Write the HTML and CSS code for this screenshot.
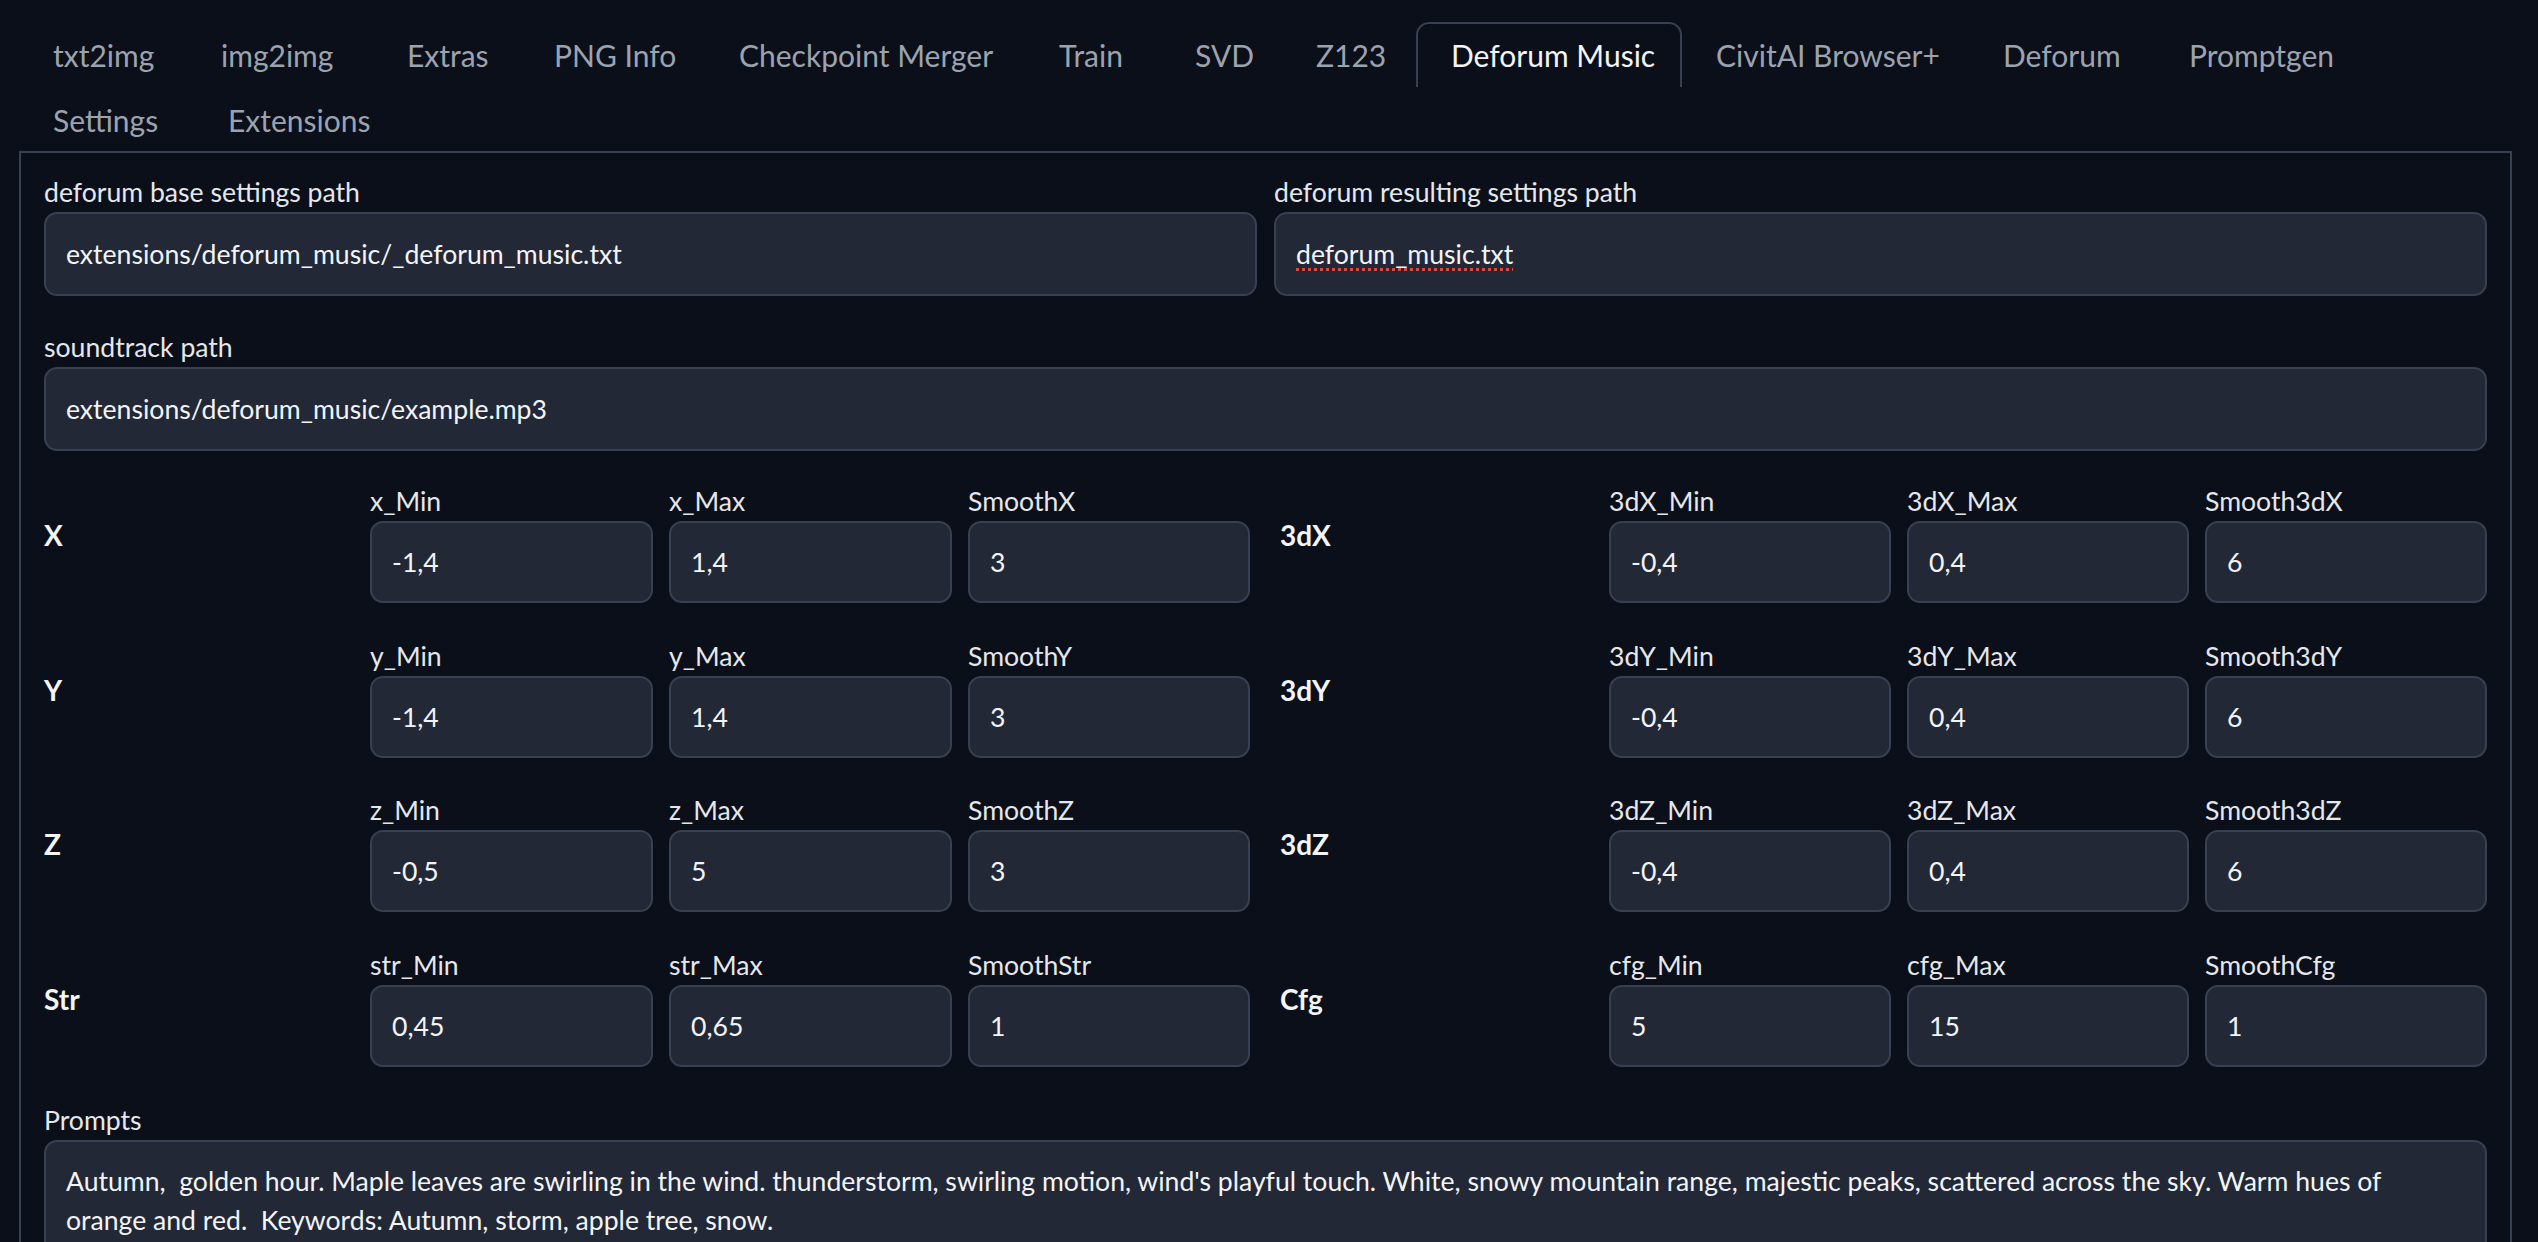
FILE: index.html
```html
<!DOCTYPE html>
<html lang="en">
<head>
<meta charset="utf-8">
<title>Deforum Music</title>
<link rel="stylesheet" href="styles.css">
</head>
<body>
<div class="app">
  <nav class="tabs">
    <div class="tab w-txt2img">txt2img</div>
    <div class="tab w-img2img">img2img</div>
    <div class="tab w-extras">Extras</div>
    <div class="tab w-png">PNG Info</div>
    <div class="tab w-merger">Checkpoint Merger</div>
    <div class="tab w-train">Train</div>
    <div class="tab w-svd">SVD</div>
    <div class="tab w-z123">Z123</div>
    <div class="tab active w-music">Deforum Music</div>
    <div class="tab w-civit">CivitAI Browser+</div>
    <div class="tab w-deforum">Deforum</div>
    <div class="tab w-promptgen">Promptgen</div>
    <div class="tab w-settings">Settings</div>
    <div class="tab w-extensions">Extensions</div>
  </nav>

  <section class="panel">
    <div class="stack">
      <div class="pair">
        <div class="field">
          <span class="lbl">deforum base settings path</span>
          <div class="box">extensions/deforum_music/_deforum_music.txt</div>
        </div>
        <div class="field">
          <span class="lbl">deforum resulting settings path</span>
          <div class="box"><span class="misspelled">deforum_music.txt</span></div>
        </div>
      </div>

      <div class="field">
        <span class="lbl">soundtrack path</span>
        <div class="box">extensions/deforum_music/example.mp3</div>
      </div>

      <div class="numrow">
        <div class="rowlbl">X</div>
        <div class="field"><span class="lbl">x_Min</span><div class="box num">-1,4</div></div>
        <div class="field"><span class="lbl">x_Max</span><div class="box num">1,4</div></div>
        <div class="field"><span class="lbl">SmoothX</span><div class="box num">3</div></div>
        <div class="rowlbl rowlbl-r">3dX</div>
        <div class="field"><span class="lbl">3dX_Min</span><div class="box num">-0,4</div></div>
        <div class="field"><span class="lbl">3dX_Max</span><div class="box num">0,4</div></div>
        <div class="field"><span class="lbl">Smooth3dX</span><div class="box num">6</div></div>
      </div>

      <div class="numrow">
        <div class="rowlbl">Y</div>
        <div class="field"><span class="lbl">y_Min</span><div class="box num">-1,4</div></div>
        <div class="field"><span class="lbl">y_Max</span><div class="box num">1,4</div></div>
        <div class="field"><span class="lbl">SmoothY</span><div class="box num">3</div></div>
        <div class="rowlbl rowlbl-r">3dY</div>
        <div class="field"><span class="lbl">3dY_Min</span><div class="box num">-0,4</div></div>
        <div class="field"><span class="lbl">3dY_Max</span><div class="box num">0,4</div></div>
        <div class="field"><span class="lbl">Smooth3dY</span><div class="box num">6</div></div>
      </div>

      <div class="numrow">
        <div class="rowlbl">Z</div>
        <div class="field"><span class="lbl">z_Min</span><div class="box num">-0,5</div></div>
        <div class="field"><span class="lbl">z_Max</span><div class="box num">5</div></div>
        <div class="field"><span class="lbl">SmoothZ</span><div class="box num">3</div></div>
        <div class="rowlbl rowlbl-r">3dZ</div>
        <div class="field"><span class="lbl">3dZ_Min</span><div class="box num">-0,4</div></div>
        <div class="field"><span class="lbl">3dZ_Max</span><div class="box num">0,4</div></div>
        <div class="field"><span class="lbl">Smooth3dZ</span><div class="box num">6</div></div>
      </div>

      <div class="numrow">
        <div class="rowlbl">Str</div>
        <div class="field"><span class="lbl">str_Min</span><div class="box num">0,45</div></div>
        <div class="field"><span class="lbl">str_Max</span><div class="box num">0,65</div></div>
        <div class="field"><span class="lbl">SmoothStr</span><div class="box num">1</div></div>
        <div class="rowlbl rowlbl-r">Cfg</div>
        <div class="field"><span class="lbl">cfg_Min</span><div class="box num">5</div></div>
        <div class="field"><span class="lbl">cfg_Max</span><div class="box num">15</div></div>
        <div class="field"><span class="lbl">SmoothCfg</span><div class="box num">1</div></div>
      </div>

      <div class="field">
        <span class="lbl">Prompts</span>
        <div class="box area"><span class="line">Autumn,  golden hour. Maple leaves are swirling in the wind. thunderstorm, swirling motion, wind's playful touch. White, snowy mountain range, majestic peaks, scattered across the sky. Warm hues of</span><span class="line">orange and red.  Keywords: Autumn, storm, apple tree, snow.</span></div>
      </div>
    </div>
  </section>
</div>
</body>
</html>
```

FILE: styles.css
```css
html, body {
  margin: 0;
  height: 1242px;
  overflow: hidden;
  background: #0b0f19;
}

body {
  font-family: Lato, "Noto Sans", sans-serif;
  color: #e5e7eb;
}

.app {
  padding: 22px 26px 0 19px;
}

/* ---------- tabs ---------- */
.tabs {
  display: flex;
  flex-wrap: wrap;
}

.tab {
  box-sizing: border-box;
  height: 65px;
  line-height: 66px;
  padding-left: 34px;
  font-size: 30px;
  color: #9ca3af;
  white-space: nowrap;
}

.tab.active {
  border: 2px solid #374151;
  border-bottom: none;
  border-radius: 13px 13px 0 0;
  padding-left: 33px;
  line-height: 62px;
  color: #f3f4f6;
}

.w-txt2img   { width: 168px; }
.w-img2img   { width: 186px; }
.w-extras    { width: 147px; }
.w-png       { width: 185px; }
.w-merger    { width: 320px; }
.w-train     { width: 136px; }
.w-svd       { width: 121px; }
.w-z123      { width: 134px; }
.w-music     { width: 266px; }
.w-civit     { width: 287px; }
.w-deforum   { width: 186px; }
.w-promptgen { width: 216px; }
.w-settings  { width: 175px; }
.w-extensions{ width: 211px; }

/* ---------- panel ---------- */
.panel {
  margin-top: -1px;
  border: 2px solid #374151;
  border-bottom: none;
  padding: 19px 23px 0 23px;
  height: 1200px;
}

.stack {
  display: flex;
  flex-direction: column;
  gap: 30.6px;
}

.pair {
  display: grid;
  grid-template-columns: 1fr 1fr;
  column-gap: 17px;
}

.field {
  display: flex;
  flex-direction: column;
  min-width: 0;
}

.lbl {
  font-size: 26.6px;
  line-height: 36px;
  padding-top: 2px;
  margin-bottom: 2px;
  color: #e5e7eb;
  white-space: nowrap;
}

.box {
  box-sizing: border-box;
  background: #222836;
  border: 2px solid #374151;
  border-radius: 13px;
  padding: 20px;
  font-size: 26.6px;
  line-height: 40px;
  color: #f3f4f6;
  white-space: nowrap;
  overflow: hidden;
}

.box.num {
  padding: 19px 20px;
}

.box.area {
  height: 220px;
  line-height: 39px;
  white-space: pre;
}

.line {
  display: block;
}

.misspelled {
  text-decoration: underline dotted #e0473c;
  text-decoration-thickness: 3px;
  text-underline-offset: 4px;
}

/* ---------- numeric rows ---------- */
.numrow {
  display: grid;
  grid-template-columns: 310px 283px 283px 282px 1fr 282px 282px 282px;
  column-gap: 16px;
  height: 124px;
}

.rowlbl {
  font-weight: 700;
  font-size: 28px;
  line-height: 40px;
  padding-top: 34px;
  color: #f3f4f6;
}

.rowlbl-r {
  padding-left: 14px;
}
```
